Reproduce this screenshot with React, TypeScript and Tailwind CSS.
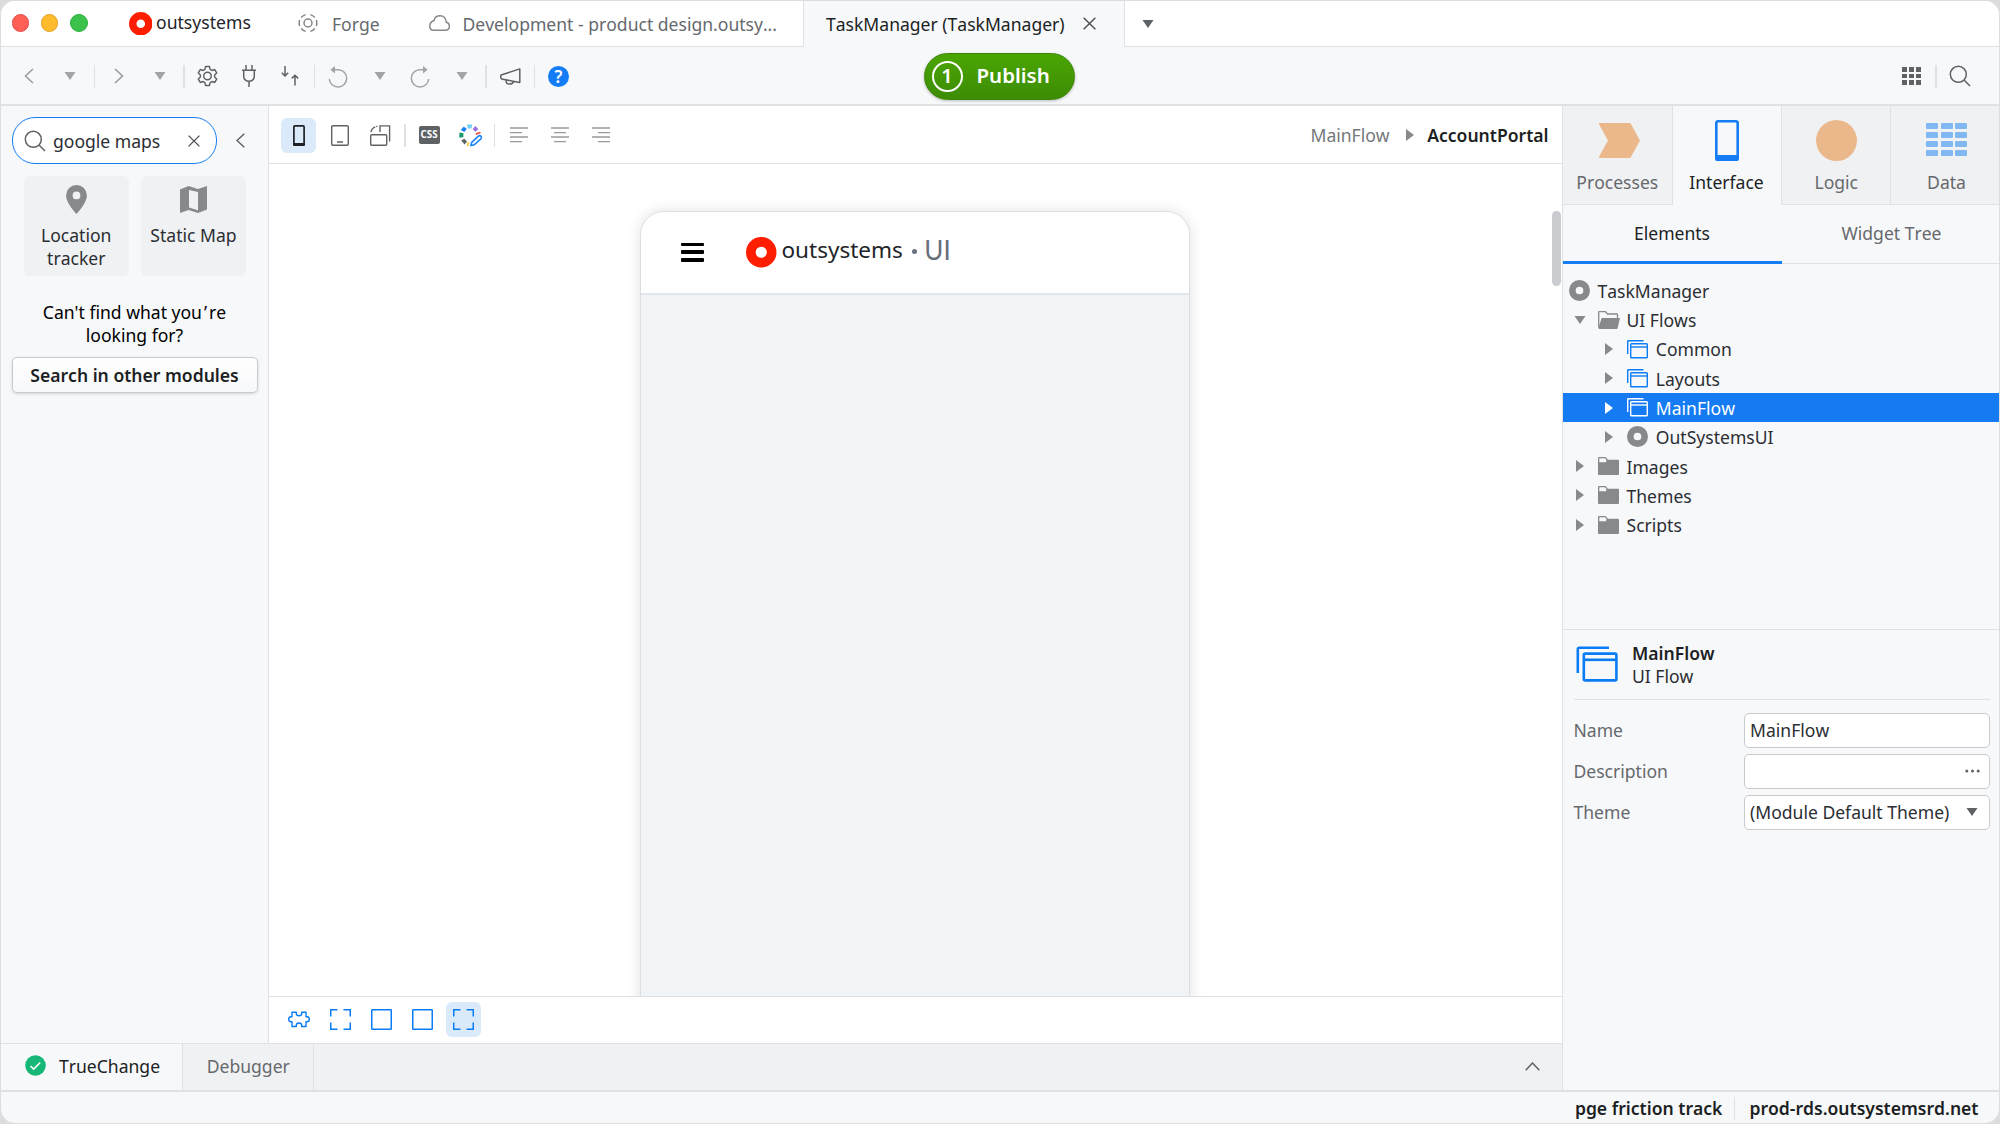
import React from "react";

type P = { className?: string };

/* ---------- shared glyphs ---------- */
const Tri = ({ dir = "down", className = "text-[#88898c]" }: { dir?: "down" | "right"; className?: string }) =>
  dir === "down" ? (
    <svg width="12" height="8" viewBox="0 0 12 8" className={className}><path d="M.5 0h11L6 8z" fill="currentColor" /></svg>
  ) : (
    <svg width="8" height="12" viewBox="0 0 8 12" className={className}><path d="M0 0l8 6-8 6z" fill="currentColor" /></svg>
  );

const Ring = ({ className }: P) => (
  <svg viewBox="0 0 24 24" className={className}><path fill="currentColor" fillRule="evenodd" d="M12 0a12 12 0 1 0 0 24 12 12 0 0 0 0-24zm0 7.6a4.4 4.4 0 1 1 0 8.800 4.400 4.400 0 0 1 0-8.800z" /></svg>
);

const Search = () => (
  <svg width="22" height="22" viewBox="0 0 22 22" fill="none" stroke="#5f6265" strokeWidth="1.5"><circle cx="9.3" cy="9.3" r="8" /><path d="M15 15l6 6" /></svg>
);

const Chevron = ({ d, w, h, className = "text-[#5f6265]" }: { d: string; w: number; h: number; className?: string }) => (
  <svg width={w} height={h} viewBox={`0 0 ${w} ${h}`} fill="none" stroke="currentColor" strokeWidth="1.5" className={className}><path d={d} /></svg>
);

const Close = ({ s = 12 }: { s?: number }) => (
  <svg width={s} height={s} viewBox="0 0 12 12" fill="none" stroke="#4b4e52" strokeWidth="1.300"><path d="M.6.6l10.800 10.800M11.400.6L.6 11.400" /></svg>
);

const FlowIcon = ({ big = false, className = "" }: { big?: boolean; className?: string }) =>
  big ? (
    <svg width="42" height="36" viewBox="0 0 42 36" fill="none" stroke="currentColor" strokeWidth="2.6" className={className}>
      <path d="M1.800 27V3.200a1.400 1.400 0 0 1 1.400-1.400H33" /><rect x="7.800" y="7.600" width="32.600" height="26.800" rx="1.400" /><path d="M8 13.800h32" />
    </svg>
  ) : (
    <svg width="21" height="19" viewBox="0 0 21 19" fill="none" stroke="currentColor" strokeWidth="1.400" className={className}>
      <path d="M.7 14V1.400Q.7.700 1.400.700H16.500" /><rect x="3.700" y="3.700" width="16.600" height="14" rx=".8" /><path d="M3.700 7h16.600" />
    </svg>
  );

const Folder = () => (
  <svg width="21" height="18" viewBox="0 0 21 18"><path fill="#88898c" d="M0 1a1 1 0 0 1 1-1h6.500L10 2.800h10a1 1 0 0 1 1 1V17a1 1 0 0 1-1 1H1a1 1 0 0 1-1-1z" /><path d="M1.300 5.200V1.300H7l1.500 1.700-.6 2.200z" fill="#f7f8fa" /></svg>
);
const FolderOpen = () => (
  <svg width="22" height="18" viewBox="0 0 22 18"><path d="M.7 16.500V1.200Q.7.700 1.200.700H7.500L9.600 3H18.800q.7 0 .7.700V8" fill="none" stroke="#88898c" strokeWidth="1.300" /><path d="M3.600 7H22l-2.400 10.200a1 1 0 0 1-1 .8H1.500a1 1 0 0 1-1-1z" fill="#88898c" /></svg>
);

/* ---------- toolbar building blocks ---------- */
const Slot = ({ children }: { children?: React.ReactNode }) => <div className="flex h-9 w-[41px] shrink-0 items-center justify-center">{children}</div>;
const Sep = () => <div className="flex h-[23px] w-[7.500px] shrink-0 justify-center"><div className="w-[1.500px] bg-[#dfe1e4]" /></div>;
const Active = ({ children }: { children?: React.ReactNode }) => <div className="flex size-[35px] items-center justify-center rounded-[6px] bg-[#dbeafb]">{children}</div>;

const teeth = "M9.100 1h3.800l.6 2.700 1.700 1 2.700-.9 1.900 3.300-2 1.900v2l2 1.900-1.900 3.300-2.700-.9-1.700 1-.6 2.700H9.100l-.6-2.700-1.700-1-2.700.9-1.900-3.300 2-1.900v-2l-2-1.900 1.900-3.300 2.700.9 1.700-1z";
const Gear = () => (
  <svg width="23" height="24" viewBox="0 0 22 21" fill="none" stroke="#5f6265" strokeWidth="1.400" strokeLinejoin="round" className="-ml-[1px]"><path d={teeth} transform="translate(0 .5)" /><circle cx="11" cy="10.500" r="3.600" /></svg>
);
const Plug = () => (
  <svg width="14" height="22" viewBox="0 0 14 22" fill="none" stroke="#5f6265" strokeWidth="1.500"><path d="M4 0v5M10 0v5M0 5.200h14M1.700 5.200v6.300a5.300 4.800 0 0 0 10.600 0V5.200M7 16.300V22" /></svg>
);
const Swap = () => (
  <svg width="18" height="20" viewBox="0 0 18 20" fill="none" stroke="#5f6265" strokeWidth="1.500"><path d="M4 0v10M.8 6.800L4 10l3.200-3.200M14 19.500V9.200M10.800 12.400L14 9.200l3.200 3.200" /></svg>
);
const Undo = ({ flip = false }: { flip?: boolean }) => (
  <svg width="20" height="24" viewBox="0 0 20 24" fill="none" stroke="#a2a4a7" strokeWidth="1.500" className={flip ? "relative -left-[1px] top-[1px] -scale-x-100" : "relative -left-[1px] top-[1px]"}><path d="M4.500 4.700h6.200a8.700 8.700 0 1 1-9.400 9.300" /><path d="M2.300 4.700L7 1v7.400z" fill="#a2a4a7" stroke="none" /></svg>
);
const Megaphone = () => (
  <svg width="22" height="17" viewBox="0 0 22 17" fill="none" stroke="#5f6265" strokeWidth="1.500" strokeLinejoin="round"><path d="M20.800.9v13.600L2.600 11Q.9 9 2.200 7zM7 12c-.3 5.500 6.800 5 7.300 1.300" /></svg>
);
const Align = ({ x }: { x: [number, number] }) => (
  <svg width="18" height="16" viewBox="0 0 18 16" stroke="#97999c" strokeWidth="1.400"><path d={`M0 1h18M${x[0]} 5.600h12M0 10h18M${x[1]} 14.600h12`} /></svg>
);
const Palette = () => (
  <svg width="23" height="23" viewBox="0 0 23 23">
    <path fill="#6fd1f5" d="M8 .4h5.200l-.7 4H8.700z" /><path fill="#9a6fe0" d="M16.300 2l3 3.200-3 2.600-2.600-2.900z" /><path fill="#ee4b3c" d="M16.500 9.300l4.800-1.600.4 1.600-4.600 1.600z" />
    <path fill="#1480f5" d="M4.800 2.400l3 2.700-2.500 2.900-3.500-2z" /><path fill="#15966d" d="M.4 8.500l4 .8v3.800l-4 .6z" /><path fill="#5f6265" d="M2.200 16.500l3.200-1.700 2.600 2.600-2.400 3.200z" /><path fill="#fcc52e" d="M8.500 18.300l2 .3-1.300 3.600-1.200-.2z" />
    <path d="M12 21.500l.7-3.200 7-6.300a1.800 1.800 0 0 1 2.500 2.500l-7 6.300z" fill="#fff" stroke="#1480f5" strokeWidth="1.600" />
  </svg>
);
const Expand = () => (
  <svg width="21" height="21" viewBox="0 0 21 21" fill="none" stroke="#0a7cf5" strokeWidth="1.500"><path d="M.75 7.500V.75H7.500M13.500.75h6.750V7.500M20.250 13.500v6.750H13.500M7.500 20.250H.75V13.500" /></svg>
);
const Box = () => (
  <svg width="21" height="21" viewBox="0 0 21 21" fill="none" stroke="#0a7cf5" strokeWidth="1.500"><rect x=".75" y=".75" width="19.500" height="19.500" rx=".5" /></svg>
);
const Puzzle = () => (
  <svg width="22" height="17" viewBox="0 0 22 17" fill="none" stroke="#0a7cf5" strokeWidth="1.400" strokeLinejoin="round"><path d="M4 1.200h4.300v1.300c0 3 5.400 3 5.400 0V1.200H18v4.600h1.200c2.800 0 2.800 5 0 5H18v4.700h-4.300v-1.300c0-3-5.400-3-5.400 0v1.300H4v-4.700H2.800c-2.800 0-2.800-5 0-5H4z" /></svg>
);

/* ---------- tree ---------- */
type Node = { label: string; level: number; icon: "ring" | "open" | "folder" | "flow"; arrow?: "down" | "right"; active?: boolean };
const nodes: Node[] = [
  { label: "TaskManager", level: -1, icon: "ring" },
  { label: "UI Flows", level: 0, icon: "open", arrow: "down" },
  { label: "Common", level: 1, icon: "flow", arrow: "right" },
  { label: "Layouts", level: 1, icon: "flow", arrow: "right" },
  { label: "MainFlow", level: 1, icon: "flow", arrow: "right", active: true },
  { label: "OutSystemsUI", level: 1, icon: "ring", arrow: "right" },
  { label: "Images", level: 0, icon: "folder", arrow: "right" },
  { label: "Themes", level: 0, icon: "folder", arrow: "right" },
  { label: "Scripts", level: 0, icon: "folder", arrow: "right" },
];
const TreeRow = ({ n }: { n: Node }) => (
  <div className={`flex h-[29.270px] items-center ${n.active ? "bg-[#147bf3] text-white" : ""}`}>
    {n.level === 1 && <div className="w-[29.300px]" />}
    {n.level === -1 && <div className="w-[6px]" />}
    {n.arrow && <div className="flex w-[35px] items-center justify-center pr-[1px]"><Tri dir={n.arrow} className={n.active ? "text-white" : "text-[#88898c]"} /></div>}
    <div className="flex w-[28.500px] items-center">
      {n.icon === "ring" && <Ring className="size-[21px] text-[#88898c]" />}
      {n.icon === "open" && <FolderOpen />}
      {n.icon === "folder" && <Folder />}
      {n.icon === "flow" && <FlowIcon className={n.active ? "text-white" : "text-[#0a7cf5]"} />}
    </div>
    <span className="relative top-[1px]">{n.label}</span>
  </div>
);

const SideTab = ({ label, w, active, children }: { label: string; w: string; active?: boolean; children: React.ReactNode }) => (
  <div className={`flex flex-col items-center border-[#dfe1e4] ${w} ${active ? "bg-[#f7f8fa] text-[#1c1f23]" : "border-b-[1.500px] bg-[#f0f1f3] text-[#66696d]"}`}>
    <div className="mt-[14px] flex h-[42px] items-center">{children}</div>
    <span className="mt-[8px] leading-[24px]">{label}</span>
  </div>
);

const Field = ({ label, children }: { label: string; children?: React.ReactNode }) => (
  <div className="flex h-[41px] items-center">
    <span className="relative top-[1px] w-[170.500px] text-[#66696d]">{label}</span>
    <div className="flex h-[35px] flex-1 items-center justify-between rounded-[5px] border-[1.500px] border-[#c8cacd] bg-white pl-[5px] pr-[9px]">{children}</div>
  </div>
);

export default function App() {
  return (
    <div className="h-[1124px] w-[2000px] overflow-hidden bg-[#dcdcdc] font-['Noto_Sans',sans-serif] text-[17.560px] leading-[23.400px] text-[#2b2e33] [font-kerning:none]">
      <div className="flex h-full flex-col overflow-hidden rounded-[15px] border border-[#dcdddf] bg-[#f7f8fa]">
        {/* window tabs */}
        <div className="flex h-[45.500px] shrink-0 whitespace-nowrap">
          <div className="flex w-[802.500px] shrink-0 items-center border-b-[1.500px] border-r-[1.500px] border-[#dfe1e4] bg-white text-[#66696d]">
            <div className="ml-[10.500px] flex w-[117px] gap-[11.700px]">
              <i className="size-[17.600px] rounded-full border border-[#e24b44] bg-[#fe5f57]" />
              <i className="size-[17.600px] rounded-full border border-[#dfa023] bg-[#febb2e]" />
              <i className="size-[17.600px] rounded-full border border-[#2aae3a] bg-[#3ac24c]" />
            </div>
            <Ring className="size-[23.500px] text-[#ff1f00]" />
            <span className="relative -top-[1px] ml-[4px] w-[142px] text-[17.600px] text-[#222428]">outsystems</span>
            <svg width="20" height="20" viewBox="0 0 20 20" fill="none" stroke="#85888b" strokeWidth="1.500"><circle cx="10" cy="10" r="4" /><path d="M7.700 1.600A8.700 8.700 0 0 0 3.200 4.500M12.300 1.600a8.700 8.700 0 0 1 4.500 2.900M1.700 7a8.700 8.700 0 0 0 0 6M18.300 7a8.700 8.700 0 0 1 0 6M3.200 15.500a8.700 8.700 0 0 0 4.500 2.900M16.800 15.500a8.700 8.700 0 0 1-4.500 2.900" /></svg>
            <span className="relative top-[1px] ml-[14px] w-[96.500px]">Forge</span>
            <svg width="21" height="16" viewBox="0 0 21 16" fill="none" stroke="#85888b" strokeWidth="1.500"><path d="M4.500 15.200h12a4 4 0 0 0 .8-7.900C17 3.500 14.500.8 11 .8 8 .8 5.700 2.500 5 5.500 2.500 6.500.8 8.300.8 11c0 2.500 1.600 4.200 3.700 4.200z" /></svg>
            <span className="relative top-[1px] ml-[13px]">Development - product design.outsy...</span>
          </div>
          <div className="flex w-[320px] shrink-0 items-center justify-between pl-[22.500px] pr-[28px] text-[#1c1f23]">
            <span className="relative top-[1px]">TaskManager (TaskManager)</span>
            <Close s={13} />
          </div>
          <div className="flex flex-1 items-center border-b-[1.500px] border-l-[1.500px] border-[#dfe1e4] bg-white pl-[17px] pt-[2px]"><Tri className="text-[#5f6265]" /></div>
        </div>

        {/* main toolbar */}
        <div className="relative flex h-[59px] shrink-0 items-center border-b-[2px] border-[#dfe1e4] pl-[7.500px] pt-[2px]">
          <Slot><Chevron w={10} h={16} d="M9 1L1.500 8 9 15" className="text-[#97999c]" /></Slot>
          <Slot><Tri className="text-[#a2a4a7]" /></Slot>
          <Sep />
          <Slot><Chevron w={10} h={16} d="M1 1l7.500 7L1 15" className="text-[#97999c]" /></Slot>
          <Slot><Tri className="text-[#a2a4a7]" /></Slot>
          <Sep />
          <Slot><Gear /></Slot>
          <Slot><Plug /></Slot>
          <Slot><Swap /></Slot>
          <Sep />
          <Slot><Undo /></Slot>
          <Slot><Tri className="text-[#a2a4a7]" /></Slot>
          <Slot><Undo flip /></Slot>
          <Slot><Tri className="text-[#a2a4a7]" /></Slot>
          <Sep />
          <Slot><Megaphone /></Slot>
          <Sep />
          <Slot><div className="flex size-[21px] items-center justify-center rounded-full bg-[#147df5] text-[17px] font-semibold leading-none text-white">?</div></Slot>
          <div className="ml-[345px] flex h-[47px] w-[151px] shrink-0 items-center rounded-full border border-[#3d8507] bg-linear-to-b from-[#4aa603] to-[#3d8c05] pl-[6.500px] text-white shadow-[0_1px_3px_rgba(0,0,0,0.25)]">
            <div className="flex size-[31px] items-center justify-center rounded-full border-2 border-white text-[20px] font-semibold">1</div>
            <span className="ml-[14px] text-[20.500px] font-semibold">Publish</span>
          </div>
          <div className="ml-auto flex items-center pr-[18.500px]">
            <Slot>
              <div className="grid grid-cols-3 gap-[2px]">{Array.from({ length: 9 }, (_, i) => <i key={i} className="size-[4.700px] bg-[#5f6265]" />)}</div>
            </Slot>
            <Sep />
            <Slot><Search /></Slot>
          </div>
        </div>

        <div className="flex min-h-0 flex-1">
          <div className="flex w-[1561px] shrink-0 flex-col">
            <div className="flex min-h-0 flex-1">
              {/* toolbox */}
              <div className="w-[268px] shrink-0 border-r-[1.500px] border-[#dfe1e4] pt-[11.500px]">
                <div className="flex items-center">
                  <div className="ml-[11px] flex h-[47px] w-[205px] items-center rounded-[23px] border-[1.500px] border-[#147df5] bg-white pl-[11px]">
                    <Search />
                    <span className="relative top-[1px] ml-[7px] w-[134.500px]">google maps</span>
                    <Close s={12} />
                  </div>
                  <div className="ml-[19px]"><Chevron w={9} h={15} d="M8.300.7L1 7.500l7.300 6.800" /></div>
                </div>
                <div className="mt-[12px] ml-[22.500px] flex gap-[11.700px] text-center">
                  <div className="flex h-[100px] w-[105.500px] flex-col items-center rounded-[6px] bg-[#f0f1f3]">
                    <svg width="21" height="29" viewBox="0 0 21 29" className="mt-[9px]"><path fill="#88898c" fillRule="evenodd" d="M10.500 0A10.400 10.400 0 0 0 .1 10.400C.1 18 10.500 29 10.500 29s10.400-11 10.400-18.600A10.400 10.400 0 0 0 10.500 0zm0 6.500a3.900 3.900 0 1 1 0 7.800 3.900 3.900 0 0 1 0-7.800z" /></svg>
                    <span className="mt-[10px]">Location<br />tracker</span>
                  </div>
                  <div className="flex h-[100px] w-[105.500px] flex-col items-center rounded-[6px] bg-[#f0f1f3]">
                    <svg width="27" height="27" viewBox="0 0 27 27" className="mt-[10px]"><path fill="#88898c" fillRule="evenodd" d="M0 3.500L8.600 0l9.400 3L27 0v23.500L18 27l-9.400-3L0 27zM9 4v17.400L18 24.300V6z" /></svg>
                    <span className="mt-[11px]">Static Map</span>
                  </div>
                </div>
                <p className="mt-[24.500px] text-center text-black">Can't find what you<span className="mx-[2px]">’</span>re<br />looking for?</p>
                <div className="mt-[10px] ml-[11px] flex h-[35.500px] w-[246px] items-center justify-center rounded-[5px] border-[1.500px] border-[#c8cacd] bg-linear-to-b from-white to-[#f7f8fa] font-semibold text-[#1c1f23] shadow-[0_1px_3px_rgba(0,0,0,0.15)]"><span className="relative -left-[0.500px] top-[1px]">Search in other modules</span></div>
              </div>

              {/* canvas */}
              <div className="flex min-w-0 flex-1 flex-col bg-white">
                <div className="flex h-[58px] shrink-0 items-center border-b-[1.500px] border-[#dfe1e4] pl-[9px] pt-[2px]">
                  <Slot><Active><svg width="12" height="21" viewBox="0 0 12 21"><rect x=".9" y=".9" width="10.200" height="18" rx="1" fill="none" stroke="#1c2024" strokeWidth="1.700" /><path d="M0 18h12v2a1 1 0 0 1-1 1H1a1 1 0 0 1-1-1z" fill="#1c2024" /></svg></Active></Slot>
                  <Slot><svg width="18" height="21" viewBox="0 0 18 21" fill="none" stroke="#5f6265" strokeWidth="1.400"><rect x=".7" y=".7" width="16.600" height="19.600" rx="1.200" /><path d="M6 17h6" /></svg></Slot>
                  <Slot><svg width="21" height="21" viewBox="0 0 21 21" fill="none" stroke="#5f6265" strokeWidth="1.400"><rect x=".7" y="9.700" width="16" height="10.600" rx="1" /><path d="M1 7C1.500 3.800 4 1.600 7.500 1.400" strokeDasharray="7 1" /><path d="M10 7V.9h9.600V16.500" /></svg></Slot>
                  <Sep />
                  <Slot><div className="flex h-[17.500px] w-[21px] items-center justify-center rounded-[2px] bg-[#5f6265] text-[9.800px] font-bold leading-none text-white">CSS</div></Slot>
                  <Slot><Palette /></Slot>
                  <Sep />
                  <Slot><Align x={[0, 0]} /></Slot>
                  <Slot><Align x={[3, 3]} /></Slot>
                  <Slot><Align x={[6, 6]} /></Slot>
                  <div className="ml-auto flex items-center pr-[13.500px]">
                    <span className="relative top-[1px] text-[#75787c]">MainFlow</span>
                    <div className="ml-[16px] mr-[13.500px]"><Tri dir="right" /></div>
                    <span className="relative top-[1px] font-semibold text-[#1c1f23]">AccountPortal</span>
                  </div>
                </div>
                <div className="relative flex min-h-0 flex-1 overflow-hidden pt-[47px] pl-[371px]">
                  <div className="h-[900px] w-[549.500px] shrink-0 overflow-hidden rounded-t-[24px] border-[1.500px] border-[#dcdfe2] bg-[#f0f4f7] shadow-[0_0_14px_rgba(0,0,0,0.12)]">
                    <div className="flex h-[83.500px] items-center border-b-2 border-[#e2e5e9] bg-white pl-[40px]">
                      <div className="flex w-[65px] flex-col gap-[4px]">
                        <i className="h-[3.600px] w-[23px] rounded-[1px] bg-black" /><i className="h-[3.600px] w-[23px] rounded-[1px] bg-black" /><i className="h-[3.600px] w-[23px] rounded-[1px] bg-black" />
                      </div>
                      <Ring className="size-[30.500px] text-[#ff1f00]" />
                      <span className="relative -top-[3px] ml-[5px] text-[22.500px] text-[#222428]">outsystems</span>
                      <i className="relative -top-[1px] ml-[9px] size-[5px] rounded-full bg-[#68707c]" />
                      <span className="relative -top-[2px] ml-[7.500px] font-['Lato',sans-serif] text-[26px] text-[#68707c]">UI</span>
                    </div>
                  </div>
                  <div className="absolute right-[1px] top-[47px] h-[75px] w-[9px] rounded-full bg-[#c9cbcf]" />
                </div>
                <div className="flex h-[47px] shrink-0 items-center border-t-[1.500px] border-[#dfe1e4] pl-[9.500px] pb-[1px]">
                  <Slot><Puzzle /></Slot>
                  <Slot><Expand /></Slot>
                  <Slot><Box /></Slot>
                  <Slot><Box /></Slot>
                  <Slot><Active><Expand /></Active></Slot>
                </div>
              </div>
            </div>
            {/* bottom tabs */}
            <div className="flex h-[46.500px] shrink-0 border-t-[1.500px] border-[#dfe1e4] bg-[#f0f1f3]">
              <div className="flex w-[182px] items-center border-r-[1.500px] border-[#dfe1e4] bg-[#f7f8fa] pl-[23.500px] text-[#1c1f23]">
                <svg width="21" height="21" viewBox="0 0 21 21" className="-mt-[2px]"><circle cx="10.500" cy="10.500" r="10.300" fill="#17b877" /><path d="M5.500 11l3.200 3.100 6.500-6.600" fill="none" stroke="#fff" strokeWidth="1.700" /></svg>
                <span className="ml-[13.500px]">TrueChange</span>
              </div>
              <div className="flex w-[130.500px] items-center justify-center border-r-[1.500px] border-[#dfe1e4] pl-[1px] text-[#66696d]">Debugger</div>
              <div className="ml-auto flex items-center pr-[22px]"><Chevron w={15} h={9} d="M.7 8.300L7.500 1l6.800 7.300" /></div>
            </div>
          </div>

          {/* right panel */}
          <div className="flex min-w-0 flex-1 flex-col border-l-[1.500px] border-[#dfe1e4]">
            <div className="flex h-[99px] shrink-0">
              <SideTab label="Processes" w="w-[109.500px] border-r-[1.500px]"><svg width="41" height="35" viewBox="0 0 41 35" className="ml-[4px]"><path fill="#ebb88b" d="M1 0h29.500a1.500 1.500 0 0 1 1.300.8L41 17.500l-9.200 16.700a1.500 1.500 0 0 1-1.300.8H1a1 1 0 0 1-.9-1.500L9 17.500.1 1.500A1 1 0 0 1 1 0z" /></svg></SideTab>
              <SideTab label="Interface" w="w-[108px]" active><svg width="24" height="41" viewBox="0 0 24 41"><rect x="1.300" y="1.300" width="21.400" height="38" rx="2" fill="none" stroke="#147df5" strokeWidth="2.600" /><path fill="#147df5" d="M0 35h24v4a2 2 0 0 1-2 2H2a2 2 0 0 1-2-2z" /></svg></SideTab>
              <SideTab label="Logic" w="w-[110.500px] border-x-[1.500px] pl-[1px]"><div className="size-[41px] rounded-full bg-[#ebb88b]" /></SideTab>
              <SideTab label="Data" w="flex-1 pl-[3px]"><div className="-mt-[2px] grid grid-cols-3 gap-x-[2.600px] gap-y-[3px]">{Array.from({ length: 12 }, (_, i) => <i key={i} className="h-[6px] w-[12px] rounded-[1px] bg-[#82b8f2]" />)}</div></SideTab>
            </div>
            <div className="flex h-[59px] shrink-0">
              <div className="flex w-[219px] items-center justify-center border-b-[3px] border-[#147df5] pt-[2px] pr-[1px] text-[#1c1f23]">Elements</div>
              <div className="flex flex-1 items-center justify-center border-b-[1.500px] border-[#dfe1e4] pl-[2px] text-[#66696d]">Widget Tree</div>
            </div>
            <div className="h-[365.500px] shrink-0 pt-[12.500px]">{nodes.map((n) => <TreeRow key={n.label} n={n} />)}</div>
            <div className="shrink-0 border-t-[1.500px] border-[#dfe1e4] pl-[10.500px] pr-[9.500px] pt-[11.500px]">
              <div className="mb-[9.500px] flex h-[58.500px] border-b-[1.500px] border-[#dfe1e4] pl-[2.500px]">
                <FlowIcon big className="mt-[4px] text-[#0a7cf5]" />
                <div className="ml-[14px]"><div className="font-semibold text-[#1c1f23]">MainFlow</div><div>UI Flow</div></div>
              </div>
              <Field label="Name"><span className="relative top-[1px]">MainFlow</span></Field>
              <Field label="Description"><span /><svg width="15" height="4" fill="#5f6265"><circle cx="1.800" cy="2" r="1.500" /><circle cx="7.500" cy="2" r="1.500" /><circle cx="13.200" cy="2" r="1.500" /></svg></Field>
              <Field label="Theme"><span className="relative top-[1px] whitespace-nowrap">(Module Default Theme)</span><Tri className="mr-[2px] text-[#5f6265]" /></Field>
            </div>
          </div>
        </div>

        {/* status bar */}
        <div className="flex h-[33.500px] shrink-0 items-center justify-end border-t-[2px] border-[#dfe1e4] pr-[20.500px] pt-[2px] font-semibold text-[#1c1f23]">
          <span className="mr-[8.500px]">pge friction track</span>
          <Sep />
          <span className="ml-[11px]">prod-rds.outsystemsrd.net</span>
        </div>
      </div>
    </div>
  );
}
